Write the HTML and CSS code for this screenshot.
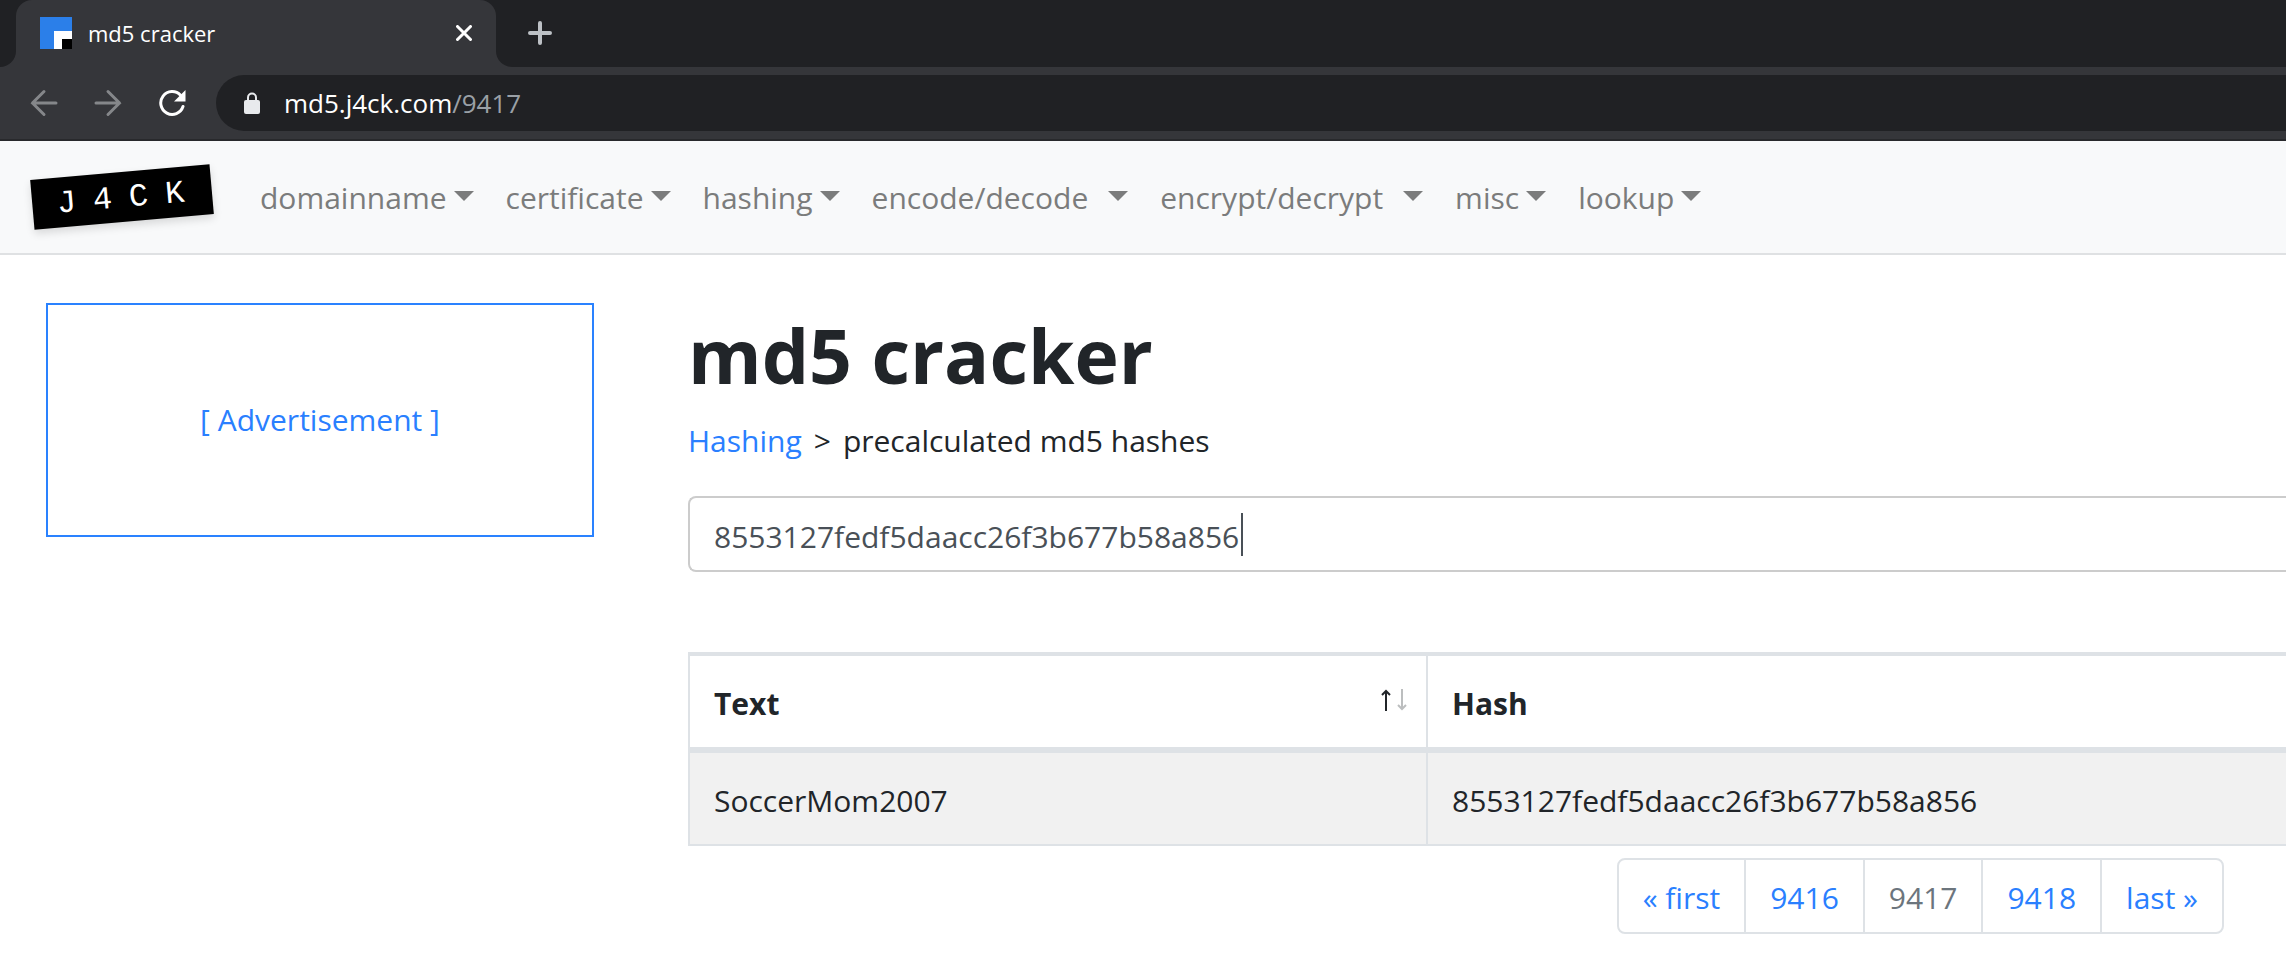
FILE: index.html
```html
<!DOCTYPE html>
<html lang="en">
<head>
<meta charset="utf-8">
<title>md5 cracker</title>
<link rel="stylesheet" href="styles.css">
</head>
<body>
<div class="browser">
  <div class="tab-strip">
    <div class="strip-start"></div>
    <div class="tab">
      <svg class="favicon" viewBox="0 0 32 32" aria-hidden="true"><path fill="#2b7fe9" d="M0 0h32v32H0z"/><path fill="#fff" d="M14 14h18v18H14z"/><path d="M22 22h10v10H22z"/></svg>
      <span class="tab-title">md5 cracker</span>
      <button class="tab-close" aria-label="Close tab"><svg viewBox="0 0 16 16"><path d="M1.500 1.500l13 13M14.500 1.500l-13 13" fill="none" stroke="#fff" stroke-width="3" stroke-linecap="round"/></svg></button>
    </div>
    <div class="strip-rest">
      <button class="new-tab" aria-label="New tab"><svg viewBox="0 0 24 24"><path d="M12 2v20M2 12h20" fill="none" stroke="#bdc1c6" stroke-width="4" stroke-linecap="round"/></svg></button>
    </div>
  </div>
  <div class="toolbar">
    <button class="tool" aria-label="Back"><svg viewBox="0 0 28 28"><path d="M14 2.500L2.500 14 14 25.500M2.500 14H26" fill="none" stroke="#85878a" stroke-width="3" stroke-linecap="round"/></svg></button>
    <button class="tool" aria-label="Forward"><svg viewBox="0 0 28 28"><path d="M14 2.500L25.500 14 14 25.500M25.500 14H2" fill="none" stroke="#85878a" stroke-width="3" stroke-linecap="round"/></svg></button>
    <button class="tool" aria-label="Reload"><svg viewBox="0 0 28 28"><path d="M22.500 6.200A11.400 11.400 0 1 0 25 17.500" fill="none" stroke="#fff" stroke-width="3" stroke-linecap="round"/><path fill="#fff" d="M27.500 1v11.500H16z"/></svg></button>
    <div class="address">
      <svg class="lock" viewBox="0 0 16 22" aria-hidden="true"><path d="M4 9V5.500a4 4 0 0 1 8 0V9" fill="none" stroke="#e8eaed" stroke-width="2"/><rect y="8" width="16" height="14" rx="2" fill="#e8eaed"/></svg>
      <span class="url">md5.j4ck.com<span class="path">/9417</span></span>
    </div>
  </div>
</div>
<header class="navbar">
  <a class="brand" href="#">J4CK</a>
  <nav class="menu">
    <button class="menu-item">domainname</button>
    <button class="menu-item">certificate</button>
    <button class="menu-item">hashing</button>
    <button class="menu-item wide">encode/decode</button>
    <button class="menu-item wide">encrypt/decrypt</button>
    <button class="menu-item">misc</button>
    <button class="menu-item">lookup</button>
  </nav>
</header>
<div class="page">
  <aside class="ad"><a href="#">[ Advertisement ]</a></aside>
  <main class="content">
    <h1>md5 cracker</h1>
    <p class="crumbs"><a href="#">Hashing</a><span>&gt;</span><span>precalculated md5 hashes</span></p>
    <div class="search-box">
      <input class="search" type="text" aria-label="Hash or text" value="8553127fedf5daacc26f3b677b58a856">
      <span class="caret"></span>
    </div>
    <table class="hashes">
      <thead>
        <tr>
          <th class="col-text" scope="col"><div class="sortable">Text
            <button class="sort" aria-label="Sort by text"><svg viewBox="0 0 28 24"><path d="M6 22V2M2 6l4-4 4 4" fill="none" stroke="#212529" stroke-width="2"/><path d="M22 0v20M18 16l4 4 4-4" fill="none" stroke="#bcbebf" stroke-width="2"/></svg></button></div></th>
          <th scope="col">Hash</th>
        </tr>
      </thead>
      <tbody>
        <tr><td>SoccerMom2007</td><td>8553127fedf5daacc26f3b677b58a856</td></tr>
      </tbody>
    </table>
    <nav class="pager" aria-label="Pages">
      <a href="#">« first</a><a href="#">9416</a><span class="current">9417</span><a href="#">9418</a><a href="#">last »</a>
    </nav>
  </main>
</div>
</body>
</html>
```

FILE: styles.css
```css
* { box-sizing: border-box; }
body {
  margin: 0;
  background: #fff;
  color: #212529;
  font: 30px/48px "Segoe UI", "Open Sans", sans-serif;
}
a { color: #2a7fff; text-decoration: none; }
button { border: 0; padding: 0; background: none; font: inherit; color: inherit; }
svg { display: block; width: 100%; height: 100%; }

.browser { background: #35363a; border-bottom: 2px solid #28292c; }
.tab-strip { display: flex; height: 67px; background: linear-gradient(#202124 50%, #35363a 50%); }
.strip-start { width: 16px; background: #202124; border-bottom-right-radius: 16px; }
.tab {
  display: flex;
  align-items: center;
  width: 480px;
  padding: 0 24px 2px;
  background: #35363a;
  border-radius: 16px 16px 0 0;
}
.favicon { width: 32px; height: 32px; }
.tab-title { flex: 1; padding-left: 16px; color: #fff; font-size: 22px; }
.tab-close { width: 16px; height: 16px; }
.strip-rest {
  flex: 1;
  display: flex;
  align-items: center;
  padding: 0 0 2px 32px;
  background: #202124;
  border-bottom-left-radius: 16px;
}
.new-tab { width: 24px; height: 24px; }

.toolbar { display: flex; align-items: center; gap: 36px; padding: 8px 0 8px 30px; }
.tool { width: 28px; height: 28px; }
.address {
  flex: 1;
  display: flex;
  align-items: center;
  gap: 24px;
  height: 56px;
  margin-left: -6px;
  padding-left: 28px;
  background: #202124;
  border-radius: 28px 0 0 28px;
}
.lock { width: 16px; height: 22px; }
.url { color: #fff; font-size: 26px; }
.path { color: #9aa0a6; }

.navbar {
  display: flex;
  align-items: center;
  gap: 48px;
  height: 114px;
  padding: 0 32px;
  background: #f8f9fa;
  border-bottom: 2px solid #dfe1e3;
}
.brand {
  width: 180px;
  height: 50px;
  padding-left: 14px;
  background: #000;
  color: #fff;
  font: 32px/54px "Liberation Mono", monospace;
  letter-spacing: 17px;
  text-align: center;
  transform: rotate(-5deg);
  box-shadow: 0 4px 8px #0002;
}
.menu { display: flex; gap: 32px; padding-top: 2px; }
.menu-item { display: flex; align-items: center; gap: 7px; color: #7b7c7c; }
.menu-item.wide { gap: 20px; }
.menu-item::after {
  content: "";
  margin-bottom: 4px;
  border: 10px solid transparent;
  border-top-color: #7b7c7c;
  border-bottom: 0;
}

.page { display: flex; gap: 94px; padding: 48px 0 0 46px; }
.ad {
  flex: none;
  display: flex;
  align-items: center;
  justify-content: center;
  width: 548px;
  height: 234px;
  border: 2px solid #2a82ff;
}
.content { flex: 1; min-width: 0; }
h1 { margin: 8px 0 18px; font-size: 75px; line-height: 88px; font-weight: 700; }
.crumbs { display: flex; gap: 12px; margin: 0 0 31px; }
.search-box { position: relative; }
.search {
  display: block;
  width: 100%;
  height: 76px;
  padding: 4px 24px 0;
  border: 2px solid #ccc;
  border-right: 0;
  border-radius: 8px 0 0 8px;
  outline: 0;
  color: #495057;
  font: inherit;
}
/* Text cursor drawn over the field, at the end of its value */
.caret { position: absolute; left: 553px; top: 17px; width: 2px; height: 43px; background: #495057; }
.hashes { width: 100%; margin-top: 80px; border-collapse: separate; border-spacing: 0; text-align: left; table-layout: fixed; }
.hashes th, .hashes td { padding: 26px 24px 22px; border-left: 2px solid #dee2e6; border-bottom: 2px solid #dee2e6; font-size: 30px; line-height: 43px; }
.hashes th { border-top: 4px solid #dee2e6; border-bottom-width: 6px; }
.hashes td { background: #f1f1f1; }
.hashes .col-text { width: 738px; padding-right: 18px; }
.sortable { display: flex; align-items: center; justify-content: space-between; }
.sort { width: 28px; height: 24px; margin-bottom: 6px; }
.pager { display: flex; width: max-content; margin: 12px 62px 0 auto; border: 2px solid #dee2e6; border-radius: 8px; }
.pager > * { padding: 14px 24px 10px; border-left: 2px solid #dee2e6; }
.pager > :first-child { border-left: 0; }
.current { color: #6c757d; }
```
